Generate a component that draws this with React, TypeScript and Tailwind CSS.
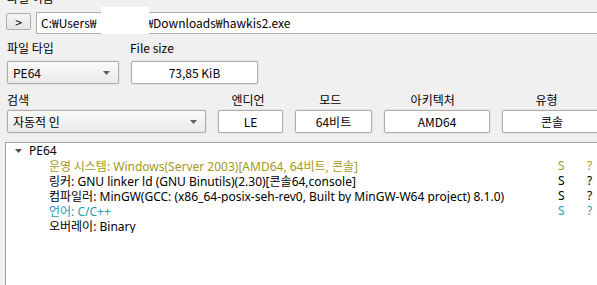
import React from "react";

const KR = { fontFamily: '"Noto Sans CJK KR", "Liberation Sans", sans-serif' };
const TREE = { fontFamily: '"Noto Sans", "Noto Sans CJK KR", sans-serif' };
const TREEKR = { fontFamily: '"Noto Sans CJK KR", sans-serif' };

function Field({ children, className = "" }: { children: React.ReactNode; className?: string }) {
  return (
    <div className={"p-[1px] rounded-[3px] bg-[#e6e6e6] " + className}>
      <div className="h-full bg-white border border-[#adadad] rounded-[2px] flex items-center justify-center text-[12px] leading-none text-black">
        {children}
      </div>
    </div>
  );
}

function Combo({ text, className = "" }: { text: string; className?: string }) {
  return (
    <div className={"p-[1px] rounded-[3px] bg-[#e6e6e6] " + className}>
      <div className="h-full border border-[#adadad] rounded-[2px] bg-gradient-to-b from-[#fafafa] to-[#eaeaea] flex items-center pl-[5px] pr-[8px] text-[12px] leading-none text-black">
        <span className="flex-1">{text}</span>
        <svg width="7" height="4" viewBox="0 0 7 4">
          <path d="M0 0 H7 L3.5 4 Z" fill="#606060" />
        </svg>
      </div>
    </div>
  );
}

function Mixed({ text }: { text: string }) {
  const parts = text.split(/([가-힣]+(?:\s+[가-힣]+)*)/);
  return (
    <>
      {parts.map((p, i) =>
        /[가-힣]/.test(p) ? (
          <span key={i} style={TREEKR}>
            {p}
          </span>
        ) : (
          <span key={i}>{p}</span>
        )
      )}
    </>
  );
}

export default function App() {
  const rows = [
    { t: "운영 시스템: Windows(Server 2003)[AMD64, 64비트, 콘솔]", c: "text-[#a39a1c]", s: true },
    { t: "링커: GNU linker ld (GNU Binutils)(2.30)[콘솔64,console]", c: "text-black", s: true },
    { t: "컴파일러: MinGW(GCC: (x86_64-posix-seh-rev0, Built by MinGW-W64 project) 8.1.0)", c: "text-black", s: true },
    { t: "언어: C/C++", c: "text-[#2a9ab4]", s: true },
    { t: "오버레이: Binary", c: "text-black", s: false },
  ];
  return (
    <div className="w-[597px] h-[285px] bg-[#f0f0f0] overflow-hidden relative flex flex-col" style={KR}>
      {/* label 파일 이름 (cut at top) */}
      <div className="h-[12px] overflow-hidden pl-[7px]">
        <div className="text-[12px] leading-[14px] mt-[-9px]">파일 이름</div>
      </div>
      {/* path row */}
      <div className="h-[22px] flex items-start pl-[6px] relative">
        <div className="mt-[1px] w-[25px] h-[17px] border border-[#adadad] rounded-[2px] bg-gradient-to-b from-[#f6f6f6] to-[#e4e4e4] flex items-center justify-center text-[12px] leading-none">
          &gt;
        </div>
        <div className="ml-[5px] flex-1 h-[22px] bg-white border border-[#adadad] border-r-0 flex items-center pl-[4px] text-[12px] leading-none">
          <span>C:₩Users₩</span>
          <span className="inline-block w-[50px]" />
          <span>₩Downloads₩hawkis2.exe</span>
        </div>
        <div className="absolute left-[101px] top-[-5px] w-[48px] h-[27px] bg-white" />
      </div>
      {/* labels row 2 */}
      <div className="h-[26px] flex items-start pt-[7px] text-[12px] leading-[14px]">
        <div className="pl-[7px] w-[130px]">파일 타입</div>
        <div>File size</div>
      </div>
      {/* controls row 2 */}
      <div className="h-[25px] flex items-center pl-[6px] gap-[10px]">
        <Combo text="PE64" className="w-[114px] h-[25px]" />
        <Field className="w-[129px] h-[25px]">73,85 KiB</Field>
      </div>
      {/* labels row 3 */}
      <div className="h-[24px] flex items-start pt-[8px] text-[12px] leading-[14px] pl-[6px] gap-[10px]">
        <div className="w-[201px] pl-[1px]">검색</div>
        <div className="w-[67px] text-center">엔디언</div>
        <div className="w-[79px] text-center">모드</div>
        <div className="w-[108px] text-center">아키텍처</div>
        <div className="w-[102px] text-center">유형</div>
      </div>
      {/* controls row 3 */}
      <div className="h-[25px] flex items-center pl-[6px] gap-[10px]">
        <Combo text="자동적 인" className="w-[201px] h-[25px] shrink-0" />
        <Field className="w-[67px] h-[25px] shrink-0">LE</Field>
        <Field className="w-[79px] h-[25px] shrink-0">64비트</Field>
        <Field className="w-[108px] h-[25px] shrink-0">AMD64</Field>
        <Field className="w-[102px] h-[25px] shrink-0">콘솔</Field>
      </div>
      {/* tree */}
      <div className="mt-[8px] ml-[5px] flex-1 bg-white border-t border-l border-[#a0a0a0] text-[12px] leading-[15px]" style={TREE}>
        <div className="h-[15px] flex items-center">
          <div className="w-[23px] flex justify-end pr-[7px]">
            <svg width="7" height="4" viewBox="0 0 7 4">
              <path d="M0 0 H7 L3.5 4 Z" fill="#505050" />
            </svg>
          </div>
          <span className="text-black">PE64</span>
        </div>
        {rows.map((r, i) => (
          <div key={i} className={"h-[15px] flex items-center whitespace-nowrap overflow-hidden " + r.c}>
            <span className="w-[43px] shrink-0" />
            <span className="w-[509px] shrink-0 overflow-hidden leading-[15px]">
              <Mixed text={r.t} />
            </span>
            {r.s && (
              <>
                <span className="w-[29px] shrink-0">S</span>
                <span>?</span>
              </>
            )}
          </div>
        ))}
      </div>
    </div>
  );
}
